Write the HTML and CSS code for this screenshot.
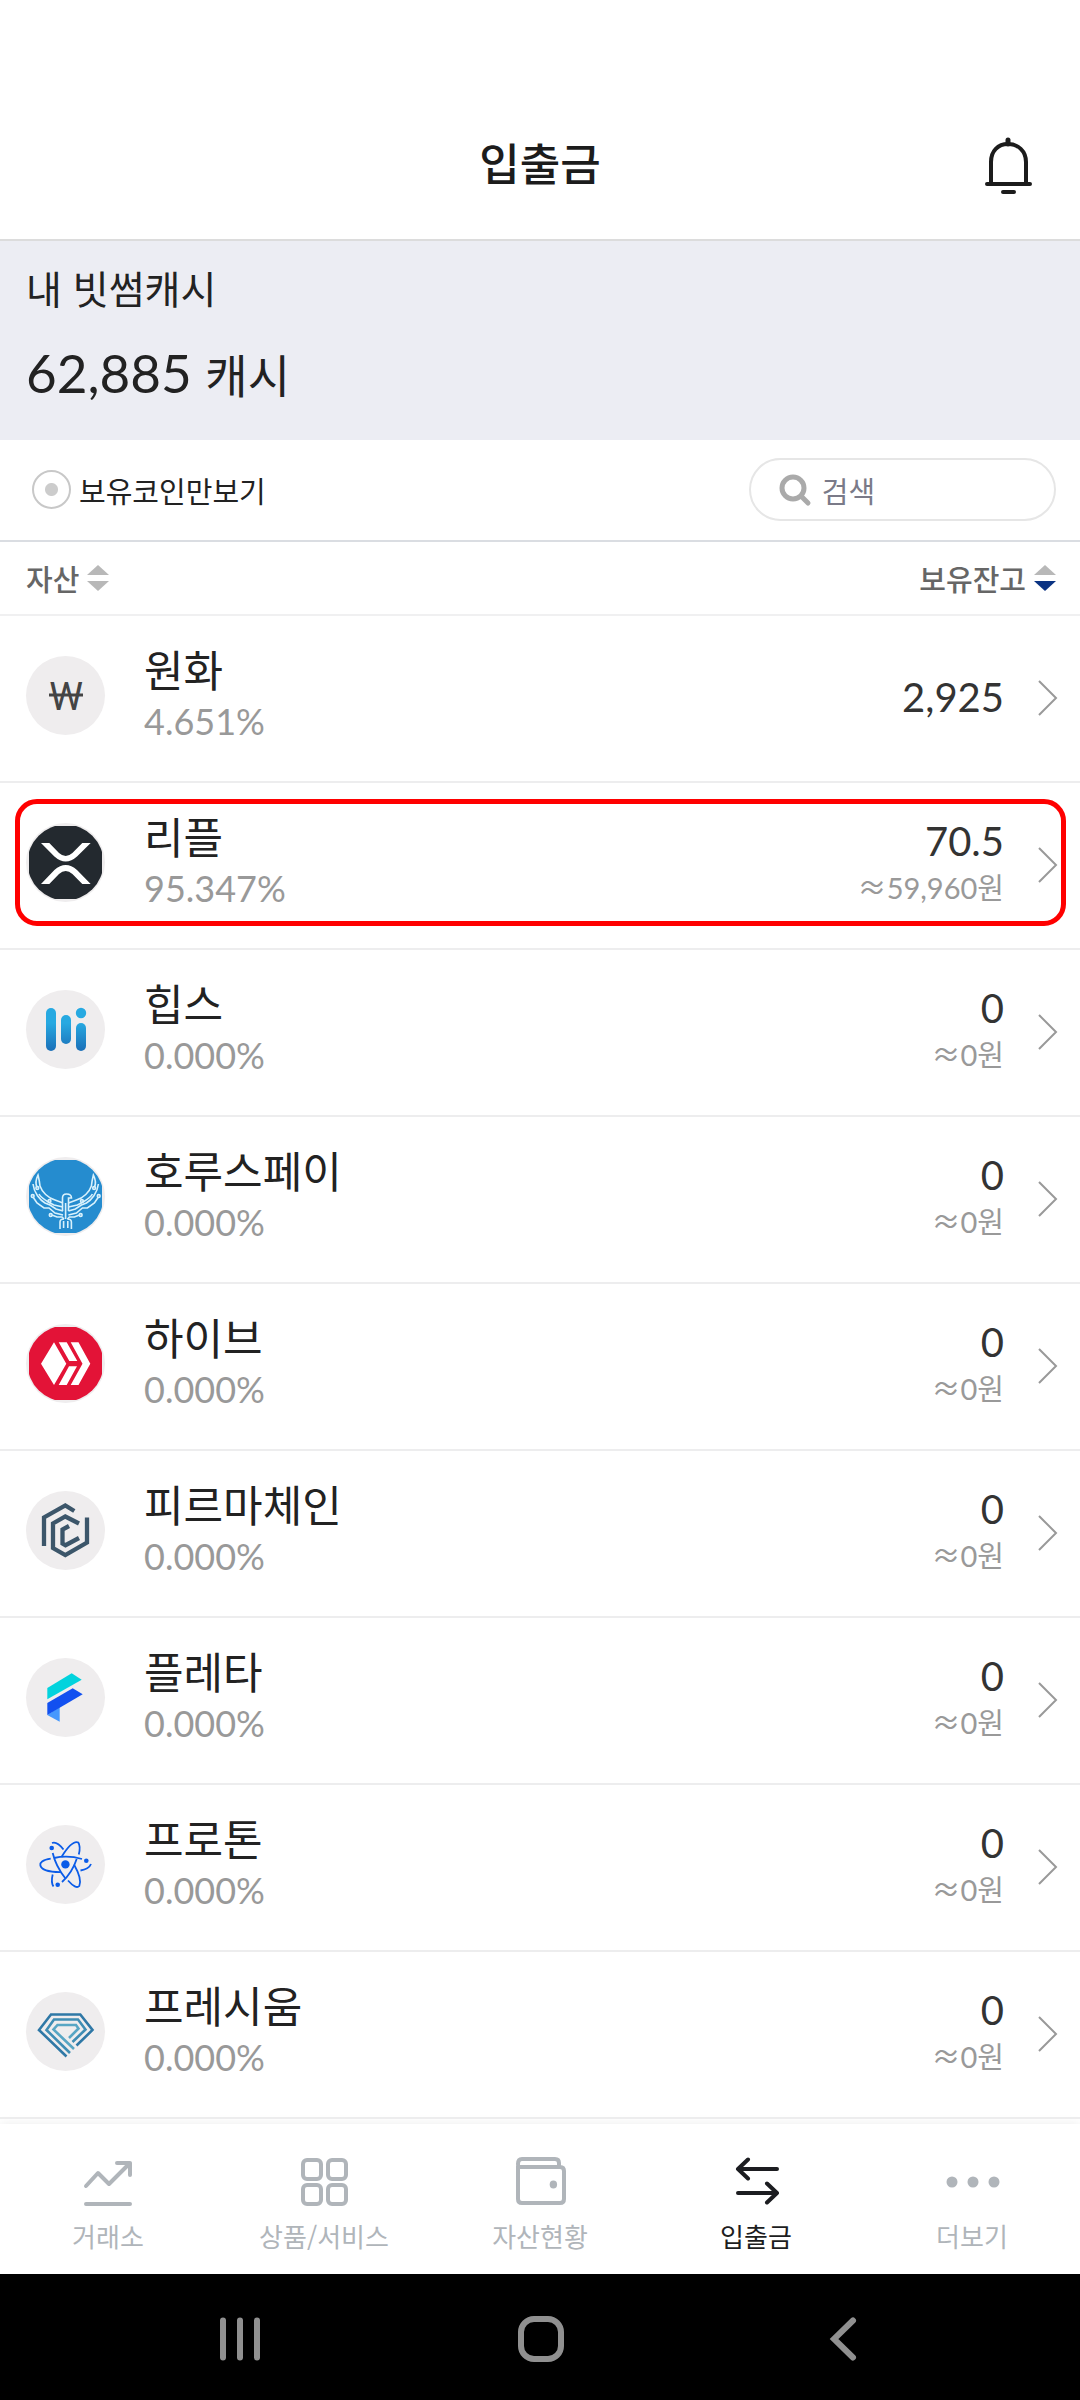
FILE: index.html
```
<!DOCTYPE html>
<html lang="ko">
<head>
    <meta charset="UTF-8">
    <meta name="viewport" content="width=device-width, initial-scale=1.0">
    <title>입출금</title>
    <link rel="stylesheet" href="styles.css">
</head>
<body>
    <header class="header">
        <h1>입출금</h1>
        <button class="bell" type="button" aria-label="알림">
            <svg width="50" height="60" viewBox="0 0 50 60" fill="none" stroke="#1c1c1c" stroke-width="4" stroke-linecap="round">
                <path d="M8 47V26C8 15 15 8 25 8s18 7 18 18v21" stroke-linecap="butt"/>
                <path d="M25 4v4" stroke-width="5"/>
                <path d="M4 48h43M20 56h11"/>
            </svg>
        </button>
    </header>

    <section class="summary">
        <h2>내 빗썸캐시</h2>
        <p class="balance">62,885 <span>캐시</span></p>
    </section>

    <div class="filter">
        <label class="owned">
            <input type="radio" name="owned">
            보유코인만보기
        </label>
        <label class="search">
            <svg width="34" height="34" viewBox="0 0 34 34" fill="none" stroke="#aaa">
                <circle cx="15" cy="15" r="11" stroke-width="5"/>
                <path d="M24 24l6 6" stroke-width="5" stroke-linecap="round"/>
            </svg>
            <input type="text" placeholder="검색" aria-label="검색">
        </label>
    </div>

    <div class="sort">
        <button type="button">자산
            <svg class="arrows" width="22" height="28" viewBox="0 0 22 28"><path class="up" d="M0 11L11 1l11 10z"/><path class="down" d="M0 17l11 10 11-10z"/></svg>
        </button>
        <button type="button" class="desc">보유잔고
            <svg class="arrows" width="22" height="28" viewBox="0 0 22 28"><path class="up" d="M0 11L11 1l11 10z"/><path class="down" d="M0 17l11 10 11-10z"/></svg>
        </button>
    </div>

    <ul class="assets">
        <li>
            <a href="#">
                <svg class="coin won" viewBox="0 0 79 79">
                    <text x="40" y="54" text-anchor="middle">W</text>
                    <path d="M23 39h34"/>
                </svg>
                <span class="asset"><span class="name">원화</span><span class="percent">4.651%</span></span>
                <span class="holding"><span class="amount">2,925</span></span>
                <svg class="chevron" viewBox="0 0 20 36"><path d="M1 1l17 17L1 35"/></svg>
            </a>
        </li>
        <li class="highlight">
            <a href="#">
                <svg class="coin" viewBox="0 0 79 79">
                    <defs><clipPath id="face"><rect x="3" y="3" width="73" height="73"/></clipPath></defs>
                    <circle cx="39.5" cy="39.5" r="38" fill="#23292f" clip-path="url(#face)"/>
                    <path fill="#fff" d="M15 20h8.3L33 30q6.700 6 13.400 0L56.300 20h8.400L51 33.500q-11.300 10-22.600 0zM15 61h8.300L33 51q6.700-6 13.400 0L56.300 61h8.400L51 47q-11.300-10-22.600 0z"/>
                </svg>
                <span class="asset"><span class="name">리플</span><span class="percent">95.347%</span></span>
                <span class="holding"><span class="amount">70.5</span><span class="value"><span class="approx">≈</span>59,960원</span></span>
                <svg class="chevron" viewBox="0 0 20 36"><path d="M1 1l17 17L1 35"/></svg>
            </a>
        </li>
        <li>
            <a href="#">
                <svg class="coin" viewBox="0 0 79 79">
                    <defs><linearGradient id="bars" gradientUnits="userSpaceOnUse" x1="0" y1="18" x2="0" y2="61"><stop offset="0.350" stop-color="#27a9e1"/><stop offset="1" stop-color="#1b6fb8"/></linearGradient></defs>
                    <g fill="url(#bars)">
                        <rect x="20" y="18" width="10" height="43" rx="5"/>
                        <rect x="35" y="25" width="10" height="29" rx="5"/>
                        <rect x="50" y="33" width="10" height="28" rx="5"/>
                        <circle cx="55" cy="23" r="5.200"/>
                    </g>
                </svg>
                <span class="asset"><span class="name">힙스</span><span class="percent">0.000%</span></span>
                <span class="holding"><span class="amount">0</span><span class="value"><span class="approx">≈</span>0원</span></span>
                <svg class="chevron" viewBox="0 0 20 36"><path d="M1 1l17 17L1 35"/></svg>
            </a>
        </li>
        <li>
            <a href="#">
                <svg class="coin" viewBox="0 0 79 79">
                    <circle cx="39.5" cy="39.5" r="38" fill="#258ccf" clip-path="url(#face)"/>
                    <g fill="none" stroke="#d8f1fc" stroke-width="1.600">
                        <g id="wing">
                            <path d="M11 30c-2-4-1-8 1-12q1.500 6 2 11c2 6 8 12 15 14l8 3"/>
                            <path d="M7 27c1 9 7 16 12 19l5 2 6 4 7 2"/>
                            <path d="M13 37c2 4 6 6 11 9l4 2 9 2"/>
                            <path d="M7 40l4 6 7 5h5l6 5 8 2"/>
                            <path d="M26 58l5 2h5l2 2"/>
                            <circle cx="11.300" cy="31" r="1.400"/><circle cx="6.700" cy="39" r="1.400"/><circle cx="23.500" cy="44" r="1.400"/><circle cx="24.700" cy="58" r="1.400"/>
                            <path d="M34 72v-7q0-3 4-3M37.600 64v7"/>
                        </g>
                        <use href="#wing" transform="matrix(-1 0 0 1 79.400 0)"/>
                        <path d="M36.500 54V41q0-4 4-4 5 0 5 4h-3v13M39.600 46v16"/>
                    </g>
                </svg>
                <span class="asset"><span class="name">호루스페이</span><span class="percent">0.000%</span></span>
                <span class="holding"><span class="amount">0</span><span class="value"><span class="approx">≈</span>0원</span></span>
                <svg class="chevron" viewBox="0 0 20 36"><path d="M1 1l17 17L1 35"/></svg>
            </a>
        </li>
        <li>
            <a href="#">
                <svg class="coin" viewBox="0 0 79 79">
                    <circle cx="39.5" cy="39.5" r="38" fill="#e31337" clip-path="url(#face)"/>
                    <path fill="#fff" d="M15 39.700L28 18.300l12.300 21.400L28 61zM32.700 18.300h8L51.300 37h-8zM43 42.300h8L40.700 61h-8zM44.700 18.300h7.800l11.800 21.400L52.500 61h-7.800l11.800-21.300z"/>
                </svg>
                <span class="asset"><span class="name">하이브</span><span class="percent">0.000%</span></span>
                <span class="holding"><span class="amount">0</span><span class="value"><span class="approx">≈</span>0원</span></span>
                <svg class="chevron" viewBox="0 0 20 36"><path d="M1 1l17 17L1 35"/></svg>
            </a>
        </li>
        <li>
            <a href="#">
                <svg class="coin" viewBox="0 0 79 79">
                    <path fill="none" stroke="#3c566a" stroke-width="4.300" d="M18 55V26.500L39.300 14.500l9 5.500M61 26.500V51.500L39.300 64 27 57V32.500L39.300 25.500 53 32.500M43 35l-6.500 3.500V52.500l3 1.700L53 47"/>
                </svg>
                <span class="asset"><span class="name">피르마체인</span><span class="percent">0.000%</span></span>
                <span class="holding"><span class="amount">0</span><span class="value"><span class="approx">≈</span>0원</span></span>
                <svg class="chevron" viewBox="0 0 20 36"><path d="M1 1l17 17L1 35"/></svg>
            </a>
        </li>
        <li>
            <a href="#">
                <svg class="coin" viewBox="0 0 79 79">
                    <path fill="#02d3dd" d="M21.300 30L45.700 15.300l10 6.400L21.300 41.300z"/>
                    <path fill="#4698fd" d="M21.300 57l12.400-8v14.700z"/>
                    <path fill="#1250f0" d="M21.300 45l25.400-14.700 10 6L21.300 57z"/>
                </svg>
                <span class="asset"><span class="name">플레타</span><span class="percent">0.000%</span></span>
                <span class="holding"><span class="amount">0</span><span class="value"><span class="approx">≈</span>0원</span></span>
                <svg class="chevron" viewBox="0 0 20 36"><path d="M1 1l17 17L1 35"/></svg>
            </a>
        </li>
        <li>
            <a href="#">
                <svg class="coin" viewBox="0 0 79 79">
                    <g fill="none" stroke="#0b5ce8" stroke-width="1.800">
                        <path d="M24.700 33.700C16 35 14 38 14.300 40c.7 5 10 7 20 7.200M28 33q14-3 28 1M65 39q-2 5-10.500 6.500"/>
                        <path d="M26 18q5-2 11.500 6.500M26.700 28q3 13 12.600 25.300M42 55.500q8 9 11.300 5.500 3-7-5.300-21.500"/>
                        <path d="M35.500 32Q46 15 52.300 17.500q2.500 4 .5 12M50.700 34Q46 48 36 57M26.700 49.500q-2 8 .8 12"/>
                    </g>
                    <g fill="#0b5ce8">
                        <circle cx="39.400" cy="39.400" r="4.200"/><circle cx="25.700" cy="23" r="2.300"/><circle cx="60.300" cy="35.700" r="2.300"/><circle cx="31.700" cy="59.700" r="2.300"/>
                    </g>
                </svg>
                <span class="asset"><span class="name">프로톤</span><span class="percent">0.000%</span></span>
                <span class="holding"><span class="amount">0</span><span class="value"><span class="approx">≈</span>0원</span></span>
                <svg class="chevron" viewBox="0 0 20 36"><path d="M1 1l17 17L1 35"/></svg>
            </a>
        </li>
        <li>
            <a href="#">
                <svg class="coin" viewBox="0 0 79 79">
                    <g fill="none" stroke-width="2.600">
                        <path stroke="#2f78a6" d="M50.500 53.500L66.500 38 54.300 22.500H25L13 38l27.500 26.500"/>
                        <path stroke="#3f8db4" d="M46.500 50L59.500 37.500 52 27.500H28L20.500 38l23.500 23"/>
                        <path stroke="#58a6c4" d="M43 46l9.500-9.500L50 33H31.500L27.500 37.500l20.500 19.500"/>
                    </g>
                </svg>
                <span class="asset"><span class="name">프레시움</span><span class="percent">0.000%</span></span>
                <span class="holding"><span class="amount">0</span><span class="value"><span class="approx">≈</span>0원</span></span>
                <svg class="chevron" viewBox="0 0 20 36"><path d="M1 1l17 17L1 35"/></svg>
            </a>
        </li>
    </ul>

    <nav class="tabs">
        <a href="#">
            <svg viewBox="0 0 56 56"><path d="M6 32l12-13 11 11L50 9M37 9h13v12M6 50h44"/></svg>
            거래소
        </a>
        <a href="#">
            <svg viewBox="0 0 56 56"><rect x="7" y="6" width="18" height="19" rx="4"/><rect x="32" y="6" width="18" height="19" rx="4"/><rect x="7" y="31" width="18" height="19" rx="4"/><rect x="32" y="31" width="18" height="19" rx="4"/></svg>
            상품/서비스
        </a>
        <a href="#">
            <svg viewBox="0 0 56 56"><path d="M6 12V45q0 4 4 4H48q4 0 4-4V17q0-4-4-4H8q-2 0-2-3 0-5 4-5H43q4 0 4 4v4"/><ellipse class="dot" cx="41.400" cy="30.400" rx="3.700" ry="4"/></svg>
            자산현황
        </a>
        <a href="#" class="active">
            <svg viewBox="0 0 56 56"><path d="M49 15H10M20 5.500L10 15l10 9.500M10 39h39M39 29.500L49 39l-10 9.500"/></svg>
            입출금
        </a>
        <a href="#">
            <svg viewBox="0 0 56 56"><g class="dot"><circle cx="8" cy="28" r="5.500"/><circle cx="29" cy="28" r="5.500"/><circle cx="50" cy="28" r="5.500"/></g></svg>
            더보기
        </a>
    </nav>

    <div class="system-bar">
        <button type="button" aria-label="최근 앱"><svg viewBox="0 0 50 50"><path d="M10 6.500v37M27 6.500v37M44 6.500v37"/></svg></button>
        <button type="button" aria-label="홈"><svg viewBox="0 0 50 50"><rect x="6" y="5" width="40" height="40" rx="13"/></svg></button>
        <button type="button" aria-label="뒤로"><svg viewBox="0 0 50 50"><path d="M36 6.500L17 25l19 18.500"/></svg></button>
    </div>
</body>
</html>
```
FILE: styles.css
```
* {
    box-sizing: border-box;
}

body {
    margin: 0;
    min-height: 100vh;
    display: flex;
    flex-direction: column;
    background: #fff;
    color: #222;
    font-family: "Noto Sans CJK KR", sans-serif;
}

h1, h2, p, ul {
    margin: 0;
    padding: 0;
    font-weight: 400;
}

button {
    border: none;
    background: none;
    padding: 0;
    font-family: inherit;
    cursor: pointer;
}

a {
    color: inherit;
    text-decoration: none;
}

svg {
    display: block;
    flex: none;
}

/* header */
.header {
    display: grid;
    grid-template-columns: 1fr auto 1fr;
    align-items: center;
    padding: 122px 47px 37px;
    border-bottom: 2px solid #dcdcdc;
}

.header h1 {
    grid-column: 2;
    font-size: 44px;
    font-weight: 500;
    line-height: 80px;
    color: #1c1c1c;
}

.bell {
    justify-self: end;
    margin-top: 8px;
}

/* balance */
.summary {
    background: #ecedf3;
    padding: 20px 26px 29px;
}

.summary h2 {
    font-size: 39px;
    line-height: 52px;
}

.balance {
    margin-top: 22px;
    font-family: Lato, "Noto Sans CJK KR", sans-serif;
    font-size: 53px;
    line-height: 76px;
}

.balance span {
    font-size: 46px;
    line-height: 1;
}

/* filter row */
.filter {
    display: flex;
    justify-content: space-between;
    align-items: center;
    padding: 18px 24px 19px 32px;
    border-bottom: 2px solid #dadde2;
}

.owned {
    display: flex;
    align-items: center;
    gap: 8px;
    font-size: 29px;
    line-height: 40px;
}

.owned input {
    appearance: none;
    width: 39px;
    height: 39px;
    margin: 0;
    border: 2px solid #c8c8c8;
    border-radius: 50%;
    background: radial-gradient(circle, #ccc 6px, transparent 7px);
}

.search {
    display: flex;
    align-items: center;
    gap: 10px;
    width: 30%;
    height: 63px;
    padding: 0 27px;
    border: 2px solid #e6e6e6;
    border-radius: 32px;
}

.search input {
    flex: 1;
    min-width: 0;
    border: none;
    padding: 0;
    background: none;
    font-family: inherit;
    font-size: 29px;
    line-height: 40px;
}

.search input::placeholder {
    color: #7a7a88;
}

/* sort row */
.sort {
    display: flex;
    justify-content: space-between;
    padding: 16px 24px 16px 26px;
    border-bottom: 2px solid #f0f0f1;
}

.sort button {
    display: flex;
    align-items: center;
    gap: 8px;
    font-size: 29px;
    font-weight: 500;
    line-height: 40px;
    color: #666;
}

.arrows {
    fill: #b8b8b8;
}

.desc .down {
    fill: #0b3383;
}

/* asset list */
.assets {
    list-style: none;
}

.assets li {
    position: relative;
    border-bottom: 2px solid #ededee;
}

.assets a {
    display: flex;
    align-items: center;
    padding: 26px 22px 33px 26px;
}

.highlight::after {
    content: "";
    position: absolute;
    top: 16px;
    right: 14px;
    bottom: 22px;
    left: 15px;
    border: 5px solid #f00;
    border-radius: 22px;
    pointer-events: none;
}

.coin {
    width: 79px;
    height: 79px;
    border-radius: 50%;
    background: #efedee;
}

.won {
    font-family: Roboto, sans-serif;
    font-size: 38px;
    fill: #444;
    stroke: #444;
    stroke-width: 0;
}

.won path {
    stroke-width: 3;
}

.asset {
    display: flex;
    flex-direction: column;
    flex: 1;
    margin-left: 39px;
}

.name {
    font-size: 43px;
    line-height: 52px;
}

.percent {
    font-family: Lato, sans-serif;
    font-size: 36px;
    line-height: 54px;
    color: #999;
}

.holding {
    display: flex;
    flex-direction: column;
    align-items: flex-end;
    margin-right: 34px;
    padding-top: 4px;
    font-family: Lato, "Noto Sans CJK KR", sans-serif;
}

.amount {
    font-size: 40px;
    line-height: 48px;
    color: #333;
}

.value {
    font-size: 29px;
    line-height: 46px;
    color: #999;
}

.approx {
    font-family: "Noto Sans CJK KR", sans-serif;
    line-height: 1;
}

.chevron {
    width: 20px;
    height: 36px;
    margin-top: 6px;
    fill: none;
    stroke: #999;
    stroke-width: 2;
}

/* bottom tabs */
.tabs {
    display: flex;
    margin-top: auto;
    padding: 30px 0 20px;
    background: #fff;
    box-shadow: 0 0 10px rgba(0, 0, 0, 0.08);
}

.tabs a {
    flex: 1;
    display: flex;
    flex-direction: column;
    align-items: center;
    gap: 8px;
    font-size: 26px;
    line-height: 36px;
    color: #b0b5ba;
}

.tabs .active {
    color: #1c1d21;
}

.tabs svg {
    width: 56px;
    height: 56px;
    fill: none;
    stroke: currentColor;
    stroke-width: 4;
    stroke-linecap: round;
    stroke-linejoin: round;
}

.tabs .dot {
    fill: currentColor;
    stroke: none;
}

/* android navigation */
.system-bar {
    display: flex;
    justify-content: center;
    background: #000;
    padding: 40px 0 36px;
}

.system-bar button {
    width: 28%;
    display: flex;
    justify-content: center;
}

.system-bar svg {
    width: 50px;
    height: 50px;
    fill: none;
    stroke: #909090;
    stroke-width: 6;
    stroke-linecap: round;
}
```
